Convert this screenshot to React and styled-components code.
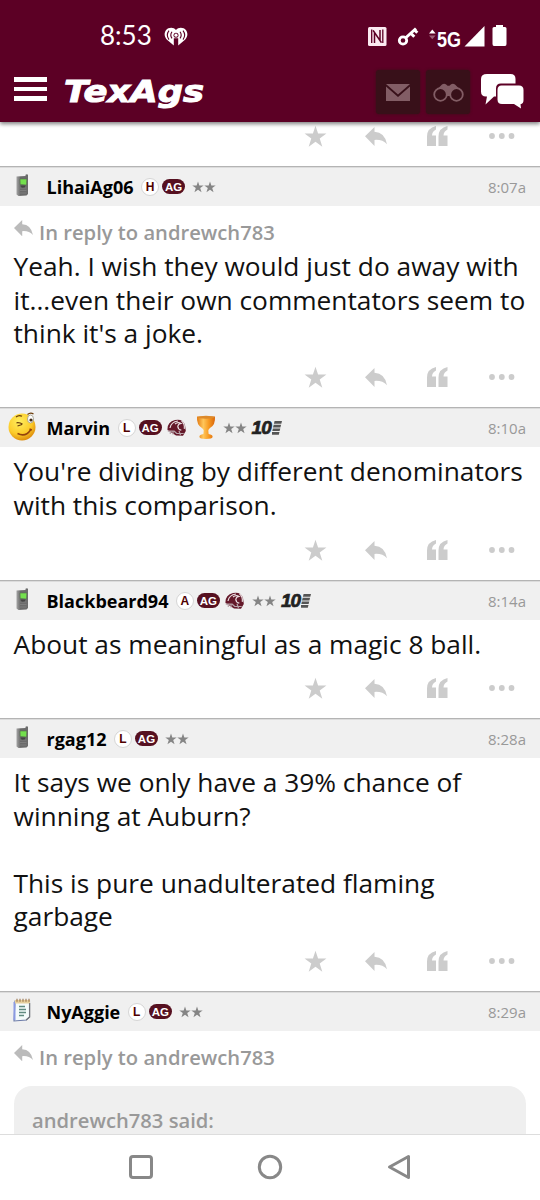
import React from "react";
import styled, { createGlobalStyle } from "styled-components";

const GlobalStyle = createGlobalStyle`
  * {
    box-sizing: border-box;
  }
  body {
    margin: 0;
    background: #fff;
    font-family: "Open Sans", "Noto Sans", sans-serif;
  }
`;

const posts = [
  {
    user: "LihaiAg06",
    avatar: "phone",
    letter: "H",
    time: "8:07a",
    replyTo: "andrewch783",
    lines: [
      "Yeah. I wish they would just do away with",
      "it...even their own commentators seem to",
      "think it's a joke.",
    ],
    height: 241,
  },
  {
    user: "Marvin",
    avatar: "smiley",
    letter: "L",
    time: "8:10a",
    helmet: true,
    trophy: true,
    ten: true,
    lines: ["You're dividing by different denominators", "with this comparison."],
    height: 173,
  },
  {
    user: "Blackbeard94",
    avatar: "phone",
    letter: "A",
    time: "8:14a",
    helmet: true,
    ten: true,
    lines: ["About as meaningful as a magic 8 ball."],
    height: 138,
  },
  {
    user: "rgag12",
    avatar: "phone",
    letter: "L",
    time: "8:28a",
    lines: [
      "It says we only have a 39% chance of",
      "winning at Auburn?",
      "",
      "This is pure unadulterated flaming",
      "garbage",
    ],
    height: 273,
  },
  {
    user: "NyAggie",
    avatar: "notepad",
    letter: "L",
    time: "8:29a",
    replyTo: "andrewch783",
    quote: "andrewch783 said:",
    height: 143,
  },
];

const StatusIcons = () => (
  <svg width="142" height="26" viewBox="0 0 142 26">
    <rect x="2" y="3" width="18.500" height="19" rx="1.500" fill="#fbeaf1" />
    <path d="M5.700 5.500v13.500M16.800 5.500v13.500" stroke="#5c0025" strokeWidth="1.300" />
    <path d="M8.500 19V8.500l7 10.200M14 6v10.500L7 6.300" fill="none" stroke="#5c0025" strokeWidth="1.500" />
    <circle cx="37" cy="16.500" r="3.700" fill="none" stroke="#fff" strokeWidth="2.800" />
    <path d="M39.500 14 50 4.500M45 9.500l3.300 3.300M48.300 5.800l3 3" fill="none" stroke="#fff" strokeWidth="3" />
    <path d="M63 9.500l3.300-4 3.300 4z" fill="#fff" />
    <path d="M63 11.500h6.600l-3.300 3.800z" fill="#9b5f78" />
    <text x="71" y="22.500" textLength="24" lengthAdjust="spacingAndGlyphs" fill="#fff" fontFamily="Liberation Sans" fontWeight="700" fontSize="22.500">5G</text>
    <path d="M98.500 22.500 118.500 2v20.500z" fill="#fff" />
    <path d="M130 1h7v2h2q1.500 0 1.500 1.500V20q0 2-1.500 2h-11q-1.500 0-1.500-2V4.500q0-1.500 1.500-1.500h2z" fill="#fff" />
  </svg>
);

const HeartRadio = () => (
  <svg width="24" height="20" viewBox="0 0 24 20">
    <path d="M12 3C9.600-.3 4.400.1 2.100 3-.3 6.300.4 10 3 12.700L9.800 18.500V11.200h4.400v7.300l6.800-5.800c2.600-2.700 3.300-6.400.9-9.700C19.600.1 14.400-.3 12 3z" fill="#fff" />
    <circle cx="12" cy="8.200" r="2.500" fill="#5c0025" />
    <circle cx="12" cy="8.200" r="1.600" fill="#fff" />
    <path d="M8 4.800q-2.400 3.300 0 6.600M16 4.800q2.400 3.300 0 6.600M5 3.700q-3.400 4.500 0 9M19 3.700q3.400 4.500 0 9" fill="none" stroke="#5c0025" strokeWidth="1.100" />
  </svg>
);

const Mail = () => (
  <svg width="24" height="17" viewBox="0 0 24 17">
    <path d="M0 0h24L12 10.500z" fill="#825d65" />
    <path d="M0 2.500 12 13 24 2.500V17H0z" fill="#825d65" />
  </svg>
);

const Binoculars = () => (
  <svg width="31" height="19" viewBox="0 0 31 19">
    <path d="M3.500 7 9 1.500q2.200-1.500 4.500.3l1 1h2l1-1q2.300-1.800 4.500-.3L27.500 7l-7 1-3 5h-4l-3-5z" fill="#825d65" />
    <circle cx="7.500" cy="11.500" r="6.300" fill="#381019" stroke="#825d65" strokeWidth="1.800" />
    <circle cx="23.500" cy="11.500" r="6.300" fill="#381019" stroke="#825d65" strokeWidth="1.800" />
  </svg>
);

const Chats = () => (
  <svg width="43" height="35" viewBox="0 0 43 35">
    <path d="M6 0h23.500q5 0 5 5v4.500H20q-5 0-5 5V22.500h-2L4.500 30.500l1.500-8H5q-5 0-5-5V5q0-5 6-5z" fill="#fff" />
    <path d="M20.500 11.500h17.500q4.500 0 4.500 4.500v10q0 4-3 4.200l.5 4.300-7-4.500H21q-4.500 0-4.500-4.500V16q0-4.500 4-4.500z" fill="#fff" />
  </svg>
);

const Star = ({ size, color }) => (
  <svg width={size} height={size} viewBox="0 0 24 24">
    <path d="M12 .8l2.700 8.100h8.700l-7 5.100 2.700 8.700-7.100-5.200-7.100 5.200 2.700-8.700-7-5.100h8.700z" fill={color} />
  </svg>
);

const Reply = ({ width = 22, color = "#ccc" }) => (
  <svg width={width} height={(width * 19) / 22} viewBox="0 0 22 19">
    <path d="M0 9.200 9.500 0v4.800q10.300.5 12.500 12.500-4.500-5-12.500-4.400v6z" fill={color} />
  </svg>
);

const Quote = () => (
  <svg width="21" height="20" viewBox="0 0 21 20">
    <path d="M9 0v3.500Q5 5.500 5 9.500h4V20H0V10.500Q0 2 9 0zM20.500 0v3.500q-4 2-4 6h4V20h-9v-9.500Q11.500 2 20.500 0z" fill="#ccc" />
  </svg>
);

const Dots = () => (
  <svg width="26" height="8" viewBox="0 0 26 8">
    <circle cx="3" cy="4" r="2.900" fill="#ccc" />
    <circle cx="12.800" cy="4" r="2.900" fill="#ccc" />
    <circle cx="22.500" cy="4" r="2.900" fill="#ccc" />
  </svg>
);

const Helmet = () => (
  <svg width="20" height="18" viewBox="0 0 20 18">
    <path d="M.5 11Q0 3 8 1q8-1.500 10 5l.8 6-2.800 4.800-7-.3-3-2z" fill="#641829" />
    <path d="M3 9q1-6 8-7M8 5q3-2.500 6-.5-3 .3-3.200 3 .2 3 3.500 3.600M14.500 1.800q3.500 3 2.800 8" fill="none" stroke="#eadfe2" strokeWidth="1.200" />
    <path d="M.8 12.200h6.400l2.500 2.300h7M3.300 12v3M6 12v3.500M12 11.800l1.500 4.500" fill="none" stroke="#b7a2a8" strokeWidth="1.200" />
  </svg>
);

const Trophy = () => (
  <svg width="20" height="25" viewBox="0 0 20 25">
    <defs>
      <linearGradient id="cup" x1="0" x2="1" y1="0" y2="0">
        <stop offset="0" stopColor="#e37a12" />
        <stop offset=".35" stopColor="#ffc65a" />
        <stop offset=".65" stopColor="#f79a22" />
        <stop offset="1" stopColor="#d9660c" />
      </linearGradient>
    </defs>
    <path d="M1 1.500h18q.6 8.500-5 11.500-1.500 1-1.700 2.500l.3 3.500q4 .8 4 2.800 0 2.200-6.600 2.200t-6.600-2.200q0-2 4-2.800l.3-3.500Q7.500 14 6 13 .4 10 1 1.500z" fill="url(#cup)" />
    <ellipse cx="10" cy="2.300" rx="8.500" ry="1.500" fill="#dd8a2b" />
  </svg>
);

const Ten = () => (
  <TenMark>
    <b>10</b>
    <svg width="10" height="14" viewBox="0 0 10 14">
      <path d="M2.600 0H10l-.7 2.800H1.900zM1.700 3.800h7.400l-.7 2.600H1zM.9 7.500h7.400L7.600 10H.3zM0 11h7.500l-.7 2.800H-.5z" fill="#555" />
    </svg>
  </TenMark>
);

const Phone = () => (
  <svg width="15" height="23" viewBox="0 0 15 23">
    <defs>
      <linearGradient id="case" x1="0" x2="1" y1="0" y2="0">
        <stop offset="0" stopColor="#a5a5a5" />
        <stop offset=".35" stopColor="#6a6a6a" />
        <stop offset="1" stopColor="#6c6c6c" />
      </linearGradient>
    </defs>
    <path d="M1.500 2.500 10.500 2V.8q1.500-1.100 2.500 0V20l-1.500 1.500-8 .5-2-1.500z" fill="url(#case)" />
    <path d="M5 5h6.800l-.3 6-6.300-.5z" fill="#74e04e" stroke="#56704c" strokeWidth=".6" />
    <path d="M5 14h6.500M5 16.500h6.500M5 19h6.500" stroke="#8a8a8a" strokeWidth=".6" />
    <path d="M5.500 11.500h5l-.8 2-3 .2z" fill="#444" />
  </svg>
);

const Smiley = () => (
  <svg width="29" height="29" viewBox="0 0 29 29">
    <defs>
      <radialGradient id="face" cx=".4" cy=".3" r=".72">
        <stop offset="0" stopColor="#ffee60" />
        <stop offset=".65" stopColor="#fccb29" />
        <stop offset="1" stopColor="#dd8b0b" />
      </radialGradient>
    </defs>
    <circle cx="14" cy="15" r="13.500" fill="url(#face)" />
    <ellipse cx="22.500" cy="7" rx="3" ry="4" fill="#fff" stroke="#9b9888" strokeWidth=".8" />
    <circle cx="23" cy="8" r="1.600" fill="#3f2a16" />
    <path d="M8 5q3-2.500 6-.7M19.500 2.500q3-2.500 6-.5M8.500 10.800q3.500-.5 6 1.500M9.500 14l4.500-1.500" fill="none" stroke="#6b3c0b" strokeWidth="1.300" />
    <path d="M9.500 21.500q8 4 13-3.500M21.500 17l2.400 1" fill="none" stroke="#94430d" strokeWidth="1.500" />
  </svg>
);

const Notepad = () => (
  <svg width="19" height="24" viewBox="0 0 19 24">
    <path d="M2 3h14.500v16l-3 3L1 23z" fill="#f5fbfb" stroke="#6a7aa8" strokeWidth="1.100" />
    <path d="M1.500 4v18" stroke="#8b9ae2" strokeWidth="2" />
    <path d="M2 2h15v3.500H2z" fill="#e6cf9d" />
    <path d="M4 .8v3M7 .8v3M10 .8v3M13 .8v3M16 .8v3" stroke="#99734a" strokeWidth="1.100" />
    <path d="M6 8.500h6M6 11.500h7M6 14.500h7M6 17.500h5" stroke="#608a80" strokeWidth="1.300" />
    <path d="M16.700 5v14l-3.700 3" fill="none" stroke="#777" strokeWidth="1.100" />
  </svg>
);

const avatars = { phone: Phone, smiley: Smiley, notepad: Notepad };

const Actions = () => (
  <ActionRow>
    <Star size={23} color="#ccc" />
    <Reply />
    <Quote />
    <Dots />
  </ActionRow>
);

const Post = ({ post }) => {
  const Avatar = avatars[post.avatar];
  return (
    <PostWrap $height={post.height}>
      <PostHeader>
        <AvatarBox>
          <Avatar />
        </AvatarBox>
        <UserName>{post.user}</UserName>
        <LetterBadge>{post.letter}</LetterBadge>
        <AgBadge>AG</AgBadge>
        {post.helmet && (
          <HelmetBox>
            <Helmet />
          </HelmetBox>
        )}
        {post.trophy && (
          <TrophyBox>
            <Trophy />
          </TrophyBox>
        )}
        <Stars>
          <Star size={12} color="#858585" />
          <Star size={12} color="#858585" />
        </Stars>
        {post.ten && <Ten />}
        <Time>{post.time}</Time>
      </PostHeader>
      {post.replyTo && (
        <InReply>
          <Reply width={19} color="#bbb" />
          <span>In reply to {post.replyTo}</span>
        </InReply>
      )}
      {post.lines && (
        <Message $reply={!!post.replyTo}>
          {post.lines.map((line, index) => (
            <p key={index}>{line}</p>
          ))}
        </Message>
      )}
      {post.quote ? <QuoteBox>{post.quote}</QuoteBox> : <Actions />}
    </PostWrap>
  );
};

const App = () => (
  <Screen>
    <GlobalStyle />
    <Header>
      <StatusBar>
        <Clock>8:53</Clock>
        <HeartRadio />
        <StatusRight>
          <StatusIcons />
        </StatusRight>
      </StatusBar>
      <NavBar>
        <Burger>
          <i />
          <i />
          <i />
        </Burger>
        <Logo>
          <svg width="146" height="40" viewBox="0 0 146 40">
            <text x="2" y="29" textLength="140" lengthAdjust="spacingAndGlyphs">TexAgs</text>
          </svg>
        </Logo>
        <NavButtons>
          <DarkButton>
            <Mail />
          </DarkButton>
          <DarkButton>
            <Binoculars />
          </DarkButton>
          <ChatButton>
            <Chats />
          </ChatButton>
        </NavButtons>
      </NavBar>
    </Header>
    <Feed>
      <FirstActions>
        <Actions />
      </FirstActions>
      {posts.map((post) => (
        <Post key={post.user} post={post} />
      ))}
    </Feed>
    <BottomNav>
      <svg width="26" height="26" viewBox="0 0 26 26">
        <rect x="2.500" y="2.500" width="21" height="21" rx="2.500" />
      </svg>
      <svg width="26" height="26" viewBox="0 0 26 26">
        <circle cx="13" cy="13" r="10.700" />
      </svg>
      <svg width="26" height="26" viewBox="0 0 26 26">
        <path d="M22.500 2.500v21L3.500 13z" strokeLinejoin="round" />
      </svg>
    </BottomNav>
  </Screen>
);

const Screen = styled.div`
  width: 540px;
  height: 1200px;
  display: flex;
  flex-direction: column;
  overflow: hidden;
  background: #fff;
`;

const Header = styled.header`
  height: 122px;
  flex: none;
  background: #5c0025;
  box-shadow: 0 2px 4px rgba(0, 0, 0, 0.5);
  z-index: 1;
`;

const StatusBar = styled.div`
  display: flex;
  align-items: center;
  height: 61px;
  padding: 12px 32px 0 99px;
`;

const Clock = styled.span`
  width: 65px;
  padding-left: 1px;
  margin-top: -3px;
  font-family: Lato, sans-serif;
  font-size: 26px;
  line-height: 30px;
  color: #fff;
`;

const StatusRight = styled.div`
  display: flex;
  margin-left: auto;
`;

const NavBar = styled.div`
  display: flex;
  height: 61px;
  padding-left: 14px;
`;

const Burger = styled.div`
  display: flex;
  flex-direction: column;
  gap: 5px;
  width: 33px;
  padding-top: 16px;

  i {
    height: 4.7px;
    background: #fff;
  }
`;

const Logo = styled.div`
  margin: 12px 0 0 15px;

  text {
    font-family: "DejaVu Sans", sans-serif;
    font-size: 30px;
    font-weight: 700;
    font-style: italic;
    fill: #fff;
    stroke: #fff;
    stroke-width: 1px;
  }
`;

const NavButtons = styled.div`
  display: flex;
  gap: 6px;
  margin: 9px 16px 0 auto;
`;

const DarkButton = styled.div`
  display: flex;
  align-items: center;
  justify-content: center;
  width: 44px;
  height: 44px;
  border-radius: 3px;
  background: #381019;
  box-shadow: 0 0 3px #381019;
`;

const ChatButton = styled.div`
  padding: 4px 0 0 5px;
`;

const Feed = styled.main`
  height: 1012px;
  flex: none;
  overflow: hidden;
`;

const FirstActions = styled.div`
  height: 44px;
  display: flex;
  justify-content: flex-end;
`;

const ActionRow = styled.div`
  display: grid;
  grid-template-columns: 61px 61.5px 62.5px 26px;
  align-items: center;
  height: 24px;
  margin: auto 25px 18px auto;
`;

const PostWrap = styled.article`
  display: flex;
  flex-direction: column;
  height: ${({ $height }) => $height}px;
`;

const PostHeader = styled.div`
  display: flex;
  align-items: center;
  flex: none;
  height: 40px;
  padding-right: 14px;
  border-top: 1px solid #b4b4b4;
  box-shadow: inset 0 1px 0 #dcdcdc;
  background: #f0f0f0;
`;

const AvatarBox = styled.div`
  display: flex;
  align-items: center;
  justify-content: center;
  width: 46.5px;
  padding-right: 2px;
  padding-bottom: 3px;
`;

const UserName = styled.span`
  font-size: 18px;
  font-weight: 700;
  color: #000;
`;

const LetterBadge = styled.span`
  display: flex;
  align-items: center;
  justify-content: center;
  width: 18px;
  height: 18px;
  margin-left: 7.5px;
  border: 1px solid #d5d5d5;
  border-radius: 50%;
  background: #fff;
  font: 700 12px "Liberation Sans", sans-serif;
  color: #500000;
`;

const AgBadge = styled.span`
  display: flex;
  align-items: center;
  justify-content: center;
  width: 23px;
  height: 15.5px;
  margin-left: 3px;
  border-radius: 8px;
  background: #561020;
  font: 700 11.5px "Liberation Sans", sans-serif;
  color: #fff;
`;

const HelmetBox = styled.div`
  display: flex;
  margin-left: 5px;
`;

const TrophyBox = styled.div`
  display: flex;
  margin-left: 9px;
`;

const Stars = styled.div`
  display: flex;
  margin-left: 7px;
`;

const TenMark = styled.div`
  display: flex;
  align-items: center;
  margin-left: 5px;

  b {
    width: 20px;
    font: italic 900 19px "Liberation Sans", sans-serif;
    letter-spacing: -1px;
    color: #222;
    -webkit-text-stroke: 0.7px #222;
  }
`;

const Time = styled.span`
  margin-left: auto;
  font-size: 15px;
  color: #999;
`;

const InReply = styled.div`
  display: flex;
  height: 44px;
  padding: 14px 0 0 14px;
  gap: 6px;
  color: #999;

  span {
    margin-top: -1px;
    font-size: 20.2px;
    font-weight: 600;
    line-height: 27px;
  }
`;

const Message = styled.div`
  padding: ${({ $reply }) => ($reply ? "0" : "8px")} 0 0 13.5px;
  white-space: nowrap;

  p {
    height: 33.5px;
    margin: 0;
    font-size: 26.3px;
    line-height: 33.5px;
    color: #111;
  }
`;

const QuoteBox = styled.div`
  height: 70px;
  margin: 15px 14px 0;
  padding: 21px 18px;
  border-radius: 18px 18px 0 0;
  background: #efefef;
  font-size: 20.2px;
  font-weight: 600;
  line-height: 27px;
  color: #999;
`;

const BottomNav = styled.nav`
  display: flex;
  align-items: center;
  justify-content: center;
  gap: 103px;
  flex: 1;
  padding-bottom: 1px;
  border-top: 1px solid #ddd;

  svg {
    fill: none;
    stroke: #888;
    stroke-width: 3px;
  }
`;

export default App;
